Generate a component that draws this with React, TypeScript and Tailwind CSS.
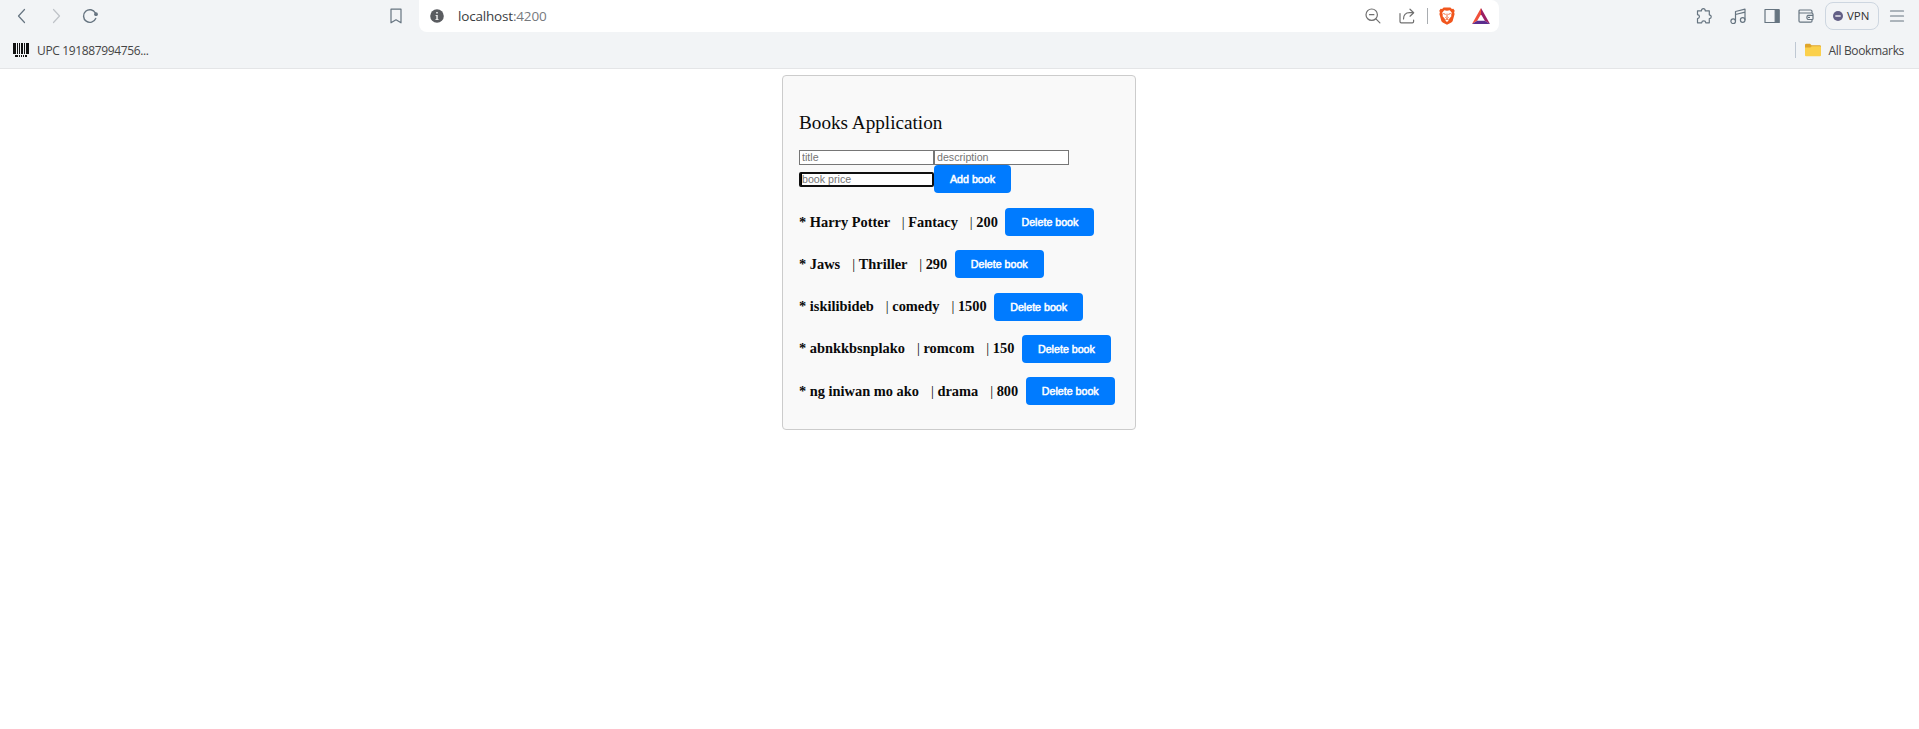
import type { ReactNode } from "react";

type Book = { title: string; description: string; price: number };

const books: Book[] = [
  { title: "Harry Potter", description: "Fantacy", price: 200 },
  { title: "Jaws", description: "Thriller", price: 290 },
  { title: "iskilibideb", description: "comedy", price: 1500 },
  { title: "abnkkbsnplako", description: "romcom", price: 150 },
  { title: "ng iniwan mo ako", description: "drama", price: 800 },
];

function Icon({ className = "", children }: { className?: string; children: ReactNode }) {
  return (
    <svg
      viewBox="0 0 16 16"
      fill="none"
      stroke="currentColor"
      strokeWidth="1.2"
      strokeLinecap="round"
      strokeLinejoin="round"
      className={`size-4 shrink-0 overflow-visible ${className}`}
    >
      {children}
    </svg>
  );
}

function Barcode() {
  return (
    <svg viewBox="0 0 16 14" className="h-3.5 w-4 shrink-0" fill="#111">
      <path d="M0 0h3v11H0zM4 0h1v11H4zM6 0h1v11H6zM8 0h2v11H8zM11 0h1v11h-1zM13 0h3v11h-3zM2 12h3v2H2zM6 12h1v2H6zM8 12h1v2H8zM10 12h1v2h-1zM12 12h2v2h-2z" />
    </svg>
  );
}

function Lion() {
  return (
    <svg viewBox="0 0 16 18" className="h-[18px] w-4 shrink-0">
      <path d="M4.600.4h6.800l1.500 1.500 1.500-.1 1.300 2-.6 1.600.5 1.600-2 7.200-1.300 1.400L8 17.800l-4.300-2.200-1.300-1.400-2-7.200.5-1.600-.6-1.600 1.300-2 1.500.1z" fill="#f1561d" />
      <path d="M5.200 3.200l2.800.5 2.800-.5 2 2.600-.6 1.900.2 1.500-2 2.200-.6 1.900L8 14.900l-1.800-1.600-.6-1.900-2-2.200.2-1.500-.6-1.900z" fill="#fff" />
      <path d="M4.300 6.500l2.400.9M11.700 6.500l-2.400.9M8 6.600v3.600M6.400 10.400l1.600 1 1.600-1M6.200 13l1.800-1 1.800 1" stroke="#f1561d" strokeWidth=".9" fill="none" />
    </svg>
  );
}

function Triangle() {
  return (
    <svg viewBox="0 0 18 16" className="h-4 w-[18px] shrink-0">
      <path d="M9 0L0 16l5.200-3.200L9 6.200z" fill="#f0503a" />
      <path d="M9 0l9 16-5.200-3.200L9 6.200z" fill="#9b1f63" />
      <path d="M0 16h18l-5.200-3.200H5.200z" fill="#5b2d8e" />
    </svg>
  );
}

function Folder() {
  return (
    <svg viewBox="0 0 16 14" className="h-3.5 w-4 shrink-0">
      <path d="M0 2Q0 .8 1.200.8H5l1.500 1.500h8.300Q16 2.300 16 3.500V12H0z" fill="#dfa52c" />
      <path d="M0 4.600h5.400l1.400-1.300h8.200q1 0 1 1v7.900q0 1-1 1H1q-1 0-1-1z" fill="#fbd04b" />
    </svg>
  );
}

function BlueButton({ className = "", children }: { className?: string; children: ReactNode }) {
  return (
    <button
      className={`h-7 shrink-0 rounded-[4px] bg-[#007bff] text-center font-['Liberation_Sans',Arial,sans-serif] text-[10.67px] leading-7 text-white [-webkit-text-stroke:0.5px_white] ${className}`}
    >
      {children}
    </button>
  );
}

function Separator() {
  return <span className="ml-[1.2px] font-normal">| </span>;
}

function BrowserChrome() {
  return (
    <header className="h-[69px] border-b border-[#e4e5e7] bg-[#f2f4f6] font-['Open_Sans','Noto_Sans',sans-serif] text-[#667480]">
      <div className="flex h-8 items-center">
        <div className="flex w-[388px] items-center gap-[18px] pl-[14px]">
          <Icon><path d="M10.500 1.500L4.500 8l6 6.500" /></Icon>
          <Icon className="text-[#bfc3c8]"><path d="M5.500 1.500l6 6.500-6 6.500" /></Icon>
          <Icon>
            <path d="M13.700 10.400A6.300 6.300 0 1 1 13.400 5" strokeWidth="1.400" />
            <circle cx="14" cy="6.200" r="1.300" fill="currentColor" />
          </Icon>
        </div>
        <div className="flex w-[31px] items-center">
          <Icon><path d="M3 1.200h10v13.600l-5-3-5 3z" /></Icon>
        </div>
        <div className="flex h-8 w-[1080px] items-center rounded-b-lg rounded-tr-lg bg-white">
          <svg viewBox="0 0 14 14" className="ml-[11px] size-3.5 shrink-0">
            <circle cx="7" cy="7" r="6.800" fill="#5a5c60" />
            <path d="M6.200 3h1.600v1.500H6.200zM5.600 6h2.200v4h.7v1H5.500v-1h.8V7h-.7z" fill="#e8e8e8" />
          </svg>
          <span className="ml-[14px] text-[13.5px] leading-8 tracking-[-0.18px] text-[#3a3d42]">
            localhost<span className="text-[#777a7e]">:4200</span>
          </span>
          <div className="ml-auto flex items-center pr-[9px] text-[#707070]">
            <Icon>
              <circle cx="6.700" cy="6.700" r="5.700" />
              <path d="M10.900 10.900l4 4M4.500 6.700h4.400" />
            </Icon>
            <Icon className="ml-[18px]">
              <path d="M1 5.500v8q0 1.300 1.300 1.300h11q1.300 0 1.300-1.300v-1.400M4.500 11c0-4 2-6.300 6-6.300h3.800M11 1.200l3.700 3.500L11 8.200" />
            </Icon>
            <div className="ml-[12px] h-4 w-px bg-[#a9adb1]" />
            <div className="ml-[11px]"><Lion /></div>
            <div className="ml-[17px]"><Triangle /></div>
          </div>
        </div>
        <div className="ml-auto flex items-center pr-[14px]">
          <Icon>
            <path d="M1.500 2.800h4c-.5-2.800 4.200-2.800 3.700 0h4.100v4c2.600.2 2.600 3.700 0 3.900v4.100H9.800c-.2-2.500-3.900-2.500-4.100 0H1.500v-4.200c2.600-.3 2.600-3.700 0-3.900z" />
          </Icon>
          <Icon className="ml-[18px]">
            <path d="M5.500 13V3.500L15 1.200v10.500M5.500 6.500L15 4.200" />
            <circle cx="3.200" cy="13.200" r="2.300" />
            <circle cx="12.700" cy="12" r="2.300" />
          </Icon>
          <Icon className="ml-[18px]">
            <rect x="1" y="1.500" width="14" height="13" />
            <path d="M11.200 2h3.800v12.500h-3.800z" fill="currentColor" />
          </Icon>
          <Icon className="ml-[18px]">
            <path d="M14 5V3.200Q14 2 12.500 2H2Q1 2 1 3v10q0 1.200 1.200 1.200h10.600Q14 14.200 14 13v-1.500M1 5h12.500q1.500 0 1.500 1.300v4.400q0 .8-.8.8H10a2.500 2.500 0 0 1 0-4.200h5" />
            <path d="M10.500 9.400h1" />
          </Icon>
          <div className="ml-[11px] flex h-7 w-[54px] items-center rounded-lg border border-[#cdd6e0] pl-[7px]">
            <svg viewBox="0 0 10 10" className="size-2.5 shrink-0">
              <circle cx="5" cy="5" r="5" fill="#625f85" />
              <path d="M2.300 5h5.400" stroke="#fff" strokeWidth="1.300" />
            </svg>
            <span className="ml-[4px] text-[11.5px] text-[#333]">VPN</span>
          </div>
          <Icon className="ml-[10px]"><path d="M1.500 3h13M1.500 8h13M1.500 13h13" /></Icon>
        </div>
      </div>
      <div className="flex h-9 items-center pl-[13px] pr-[15px] text-[12px] text-[#454545]">
        <Barcode />
        <span className="ml-2 pt-px tracking-[-0.36px]">UPC 191887994756...</span>
        <div className="ml-auto h-4 w-px bg-[#bfc8d3]" />
        <div className="ml-[9px]"><Folder /></div>
        <span className="ml-2 pt-px tracking-[-0.35px]">All Bookmarks</span>
      </div>
    </header>
  );
}

const field =
  "h-[15px] w-[135px] border border-[#767676] bg-white px-0.5 font-['Liberation_Sans',Arial,sans-serif] text-[10.67px] leading-[12px] pb-px outline-none placeholder:text-[#757575] placeholder:opacity-100";

export default function App() {
  return (
    <div className="min-h-screen bg-white">
      <BrowserChrome />
      <main className="ml-[782px] mt-[6px] h-[355px] w-[354px] rounded-[4px] border border-[#ccc] bg-[#f9f9f9] pl-4 font-['Liberation_Serif','Times_New_Roman',serif] text-[#0a0a0a]">
        <h1 className="mt-[36px] text-[19.2px] leading-[22px]">Books Application</h1>
        <form className="mt-[16px]">
          <div className="flex">
            <input className={field} placeholder="title" />
            <input className={field} placeholder="description" />
          </div>
          <div className="flex items-center">
            <div className="flex h-[15px] w-[135px] items-center rounded-[2px] border-2 border-[#101010] bg-white">
              <div className="h-3 w-px bg-black" />
              <input
                className="h-[11px] w-full font-['Liberation_Sans',Arial,sans-serif] text-[10.67px] leading-[11px] outline-none placeholder:text-[#757575] placeholder:opacity-100"
                placeholder="book price"
              />
            </div>
            <BlueButton className="w-[77px]">Add book</BlueButton>
          </div>
        </form>
        <ul className="mt-[15px] flex flex-col gap-[14.25px]">
          {books.map((book) => (
            <li key={book.title} className="flex h-7 items-center gap-[7.5px]">
              <span className="whitespace-pre pb-px text-[14.4px] font-bold leading-[26px]">
                {`* ${book.title}   `}
                <Separator />
                {`${book.description}   `}
                <Separator />
                {book.price}
              </span>
              <BlueButton className="w-[89px]">Delete book</BlueButton>
            </li>
          ))}
        </ul>
      </main>
    </div>
  );
}
